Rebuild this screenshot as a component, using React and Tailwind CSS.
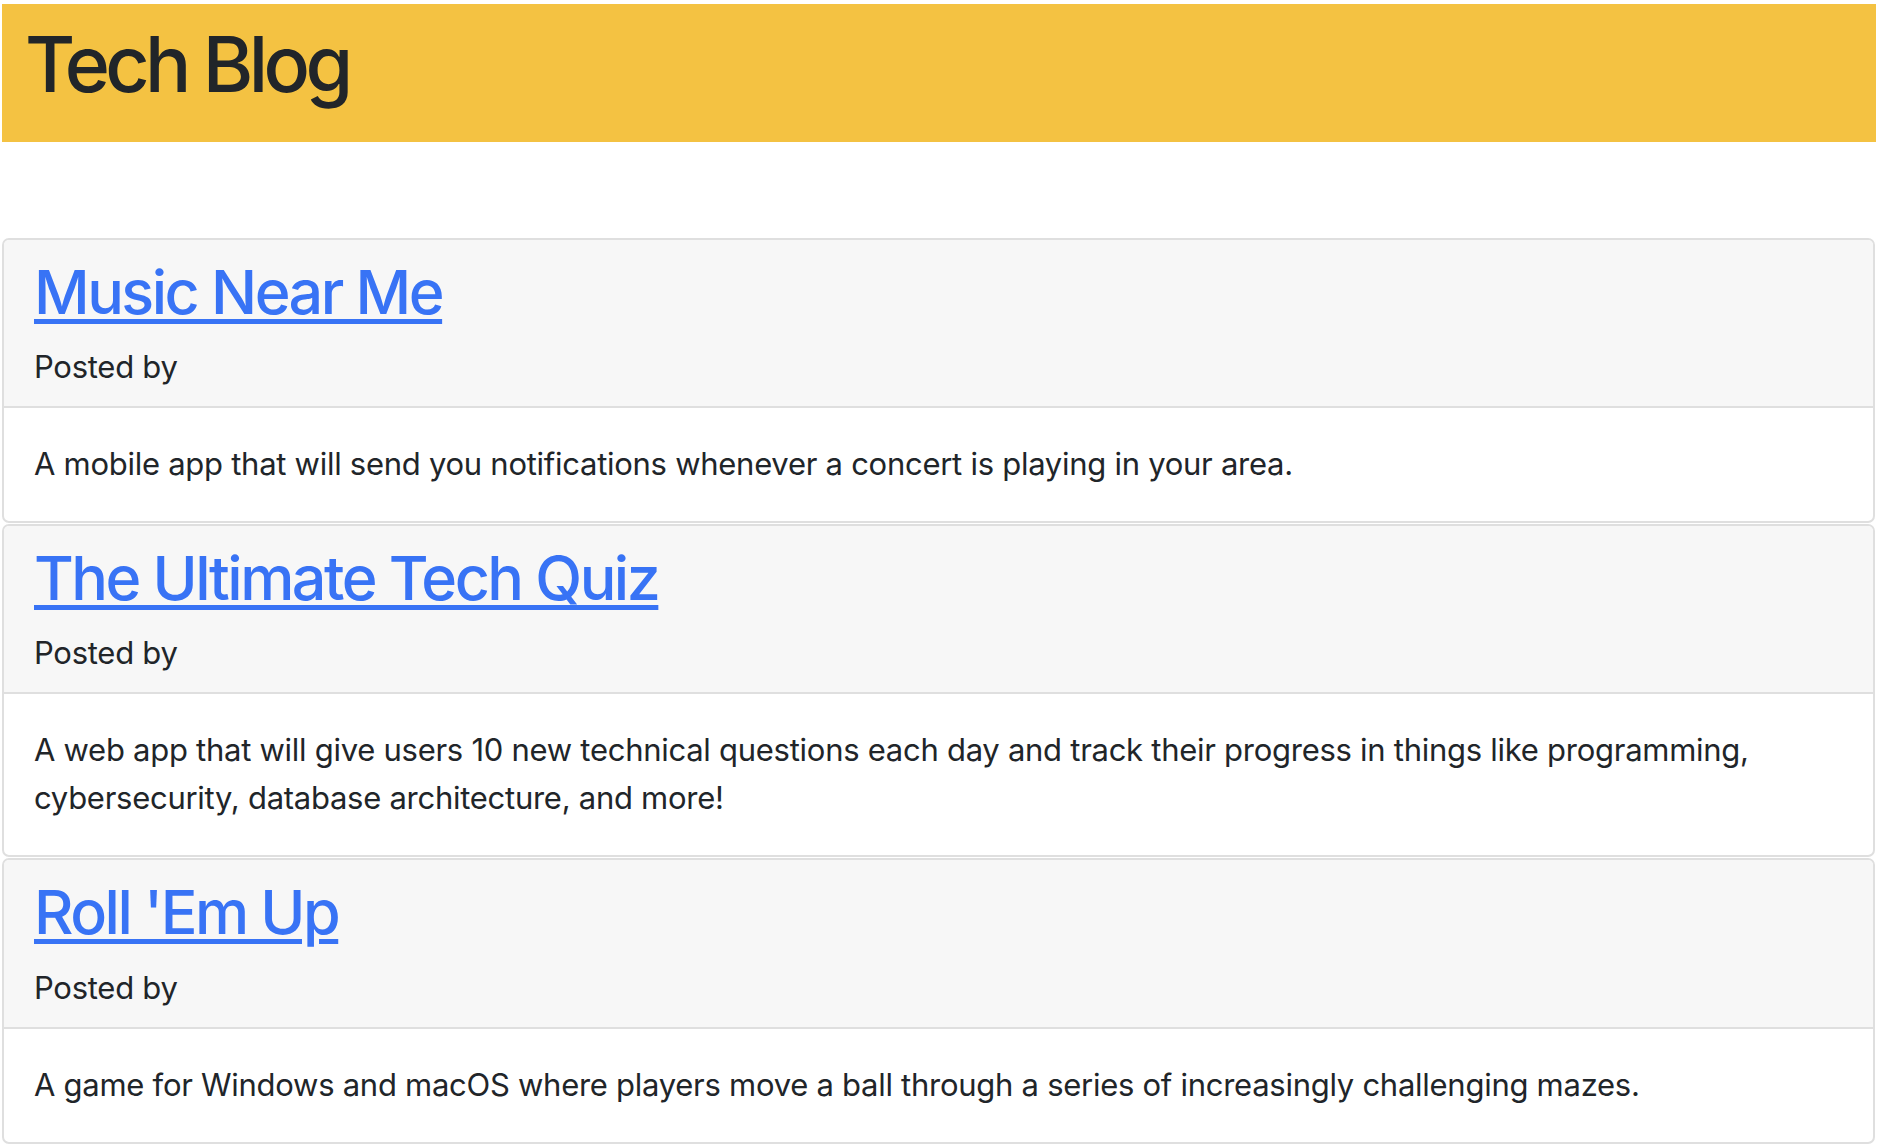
import React from "react";

const posts = [
  {
    title: "Music Near Me",
    body: "A mobile app that will send you notifications whenever a concert is playing in your area.",
  },
  {
    title: "The Ultimate Tech Quiz",
    body: "A web app that will give users 10 new technical questions each day and track their progress in things like programming, cybersecurity, database architecture, and more!",
  },
  {
    title: "Roll 'Em Up",
    body: "A game for Windows and macOS where players move a ball through a series of increasingly challenging mazes.",
  },
];

export default function App() {
  return (
    <div
      className="min-h-[1144px] bg-white px-[2px] pt-[4px] text-[#212529]"
      style={{ fontFamily: "Inter, 'Noto Sans', 'Liberation Sans', sans-serif" }}
    >
      <header className="h-[138px] bg-[#f4c242] pl-[23px] pt-[14px]">
        <h1 className="text-[77px] leading-[1.2] font-medium tracking-[-4.6px]">Tech Blog</h1>
      </header>
      <main className="mt-[96px] flex flex-col gap-[1px] pr-[1px]">
        {posts.map((p) => (
          <div key={p.title} className="overflow-hidden rounded-[7px] border-2 border-[#dfdfdf]">
            <div className="border-b-2 border-[#dfdfdf] bg-[#f7f7f7] px-[30px] pt-[16px] pb-[16px]">
              <h2 className="mb-[15px] text-[61px] leading-[1.2] font-medium tracking-[-2.5px]">
                <a
                  href="#"
                  className="text-[#3873f5] underline decoration-[5px] underline-offset-[5px]"
                >
                  {p.title}
                </a>
              </h2>
              <p className="text-[31px] leading-[46px] tracking-[-0.27px]">Posted by</p>
            </div>
            <div className="px-[30px] pt-[32px] pb-[33px] text-[31px] leading-[48px] tracking-[-0.27px]">
              {p.body}
            </div>
          </div>
        ))}
      </main>
    </div>
  );
}
